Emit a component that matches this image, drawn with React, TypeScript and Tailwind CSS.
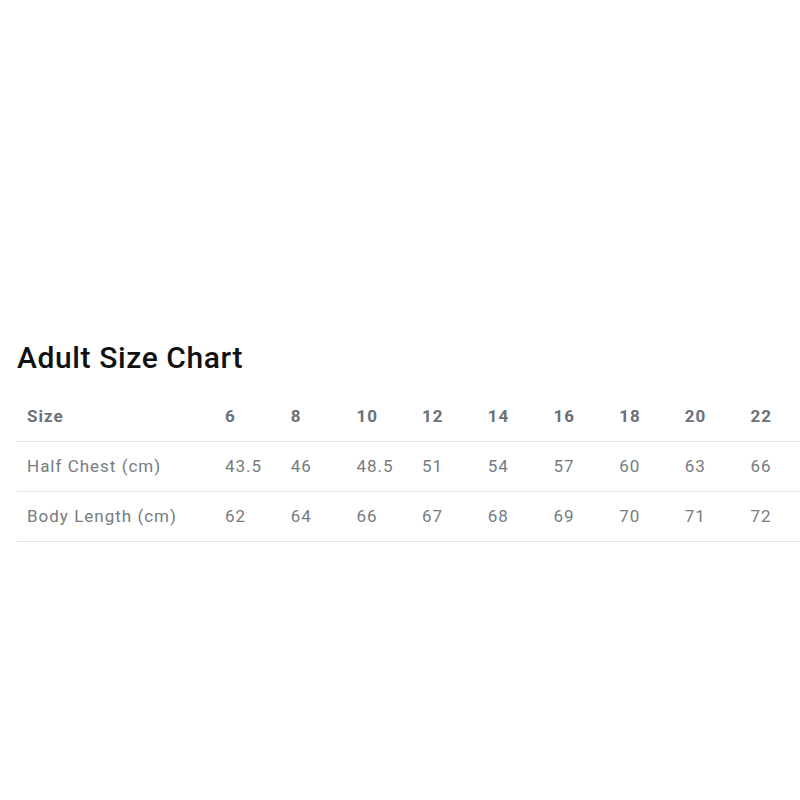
import React from "react";

const sizes = ["6", "8", "10", "12", "14", "16", "18", "20", "22"];
const rows: { label: string; values: string[] }[] = [
  { label: "Half Chest (cm)", values: ["43.5", "46", "48.5", "51", "54", "57", "60", "63", "66"] },
  { label: "Body Length (cm)", values: ["62", "64", "66", "67", "68", "69", "70", "71", "72"] },
];

export default function App() {
  return (
    <div
      className="w-[800px] h-[800px] bg-white overflow-hidden flex flex-col pt-[340px] pl-[17px]"
      style={{ fontFamily: "Roboto, 'Liberation Sans', sans-serif" }}
    >
      <h2 className="text-[30px] leading-[36px] font-medium text-[#111] mb-[16px] tracking-[0.6px]">
        Adult Size Chart
      </h2>
      <div className="w-[800px]">
        <div className="grid grid-cols-[198px_repeat(9,65.7px)] h-[50px] items-center border-b border-[#e3e3e3] text-[17px] font-bold text-[#6b7176] tracking-[1px]">
          <div className="pl-[10px]">Size</div>
          {sizes.map((s) => (
            <div key={s} className="pl-[10px]">{s}</div>
          ))}
        </div>
        {rows.map((r) => (
          <div
            key={r.label}
            className="grid grid-cols-[198px_repeat(9,65.7px)] h-[50px] items-center border-b border-[#e3e3e3] text-[17px] text-[#767c81] tracking-[1px]"
          >
            <div className="pl-[10px]">{r.label}</div>
            {r.values.map((v, i) => (
              <div key={i} className="pl-[10px]">{v}</div>
            ))}
          </div>
        ))}
      </div>
    </div>
  );
}
